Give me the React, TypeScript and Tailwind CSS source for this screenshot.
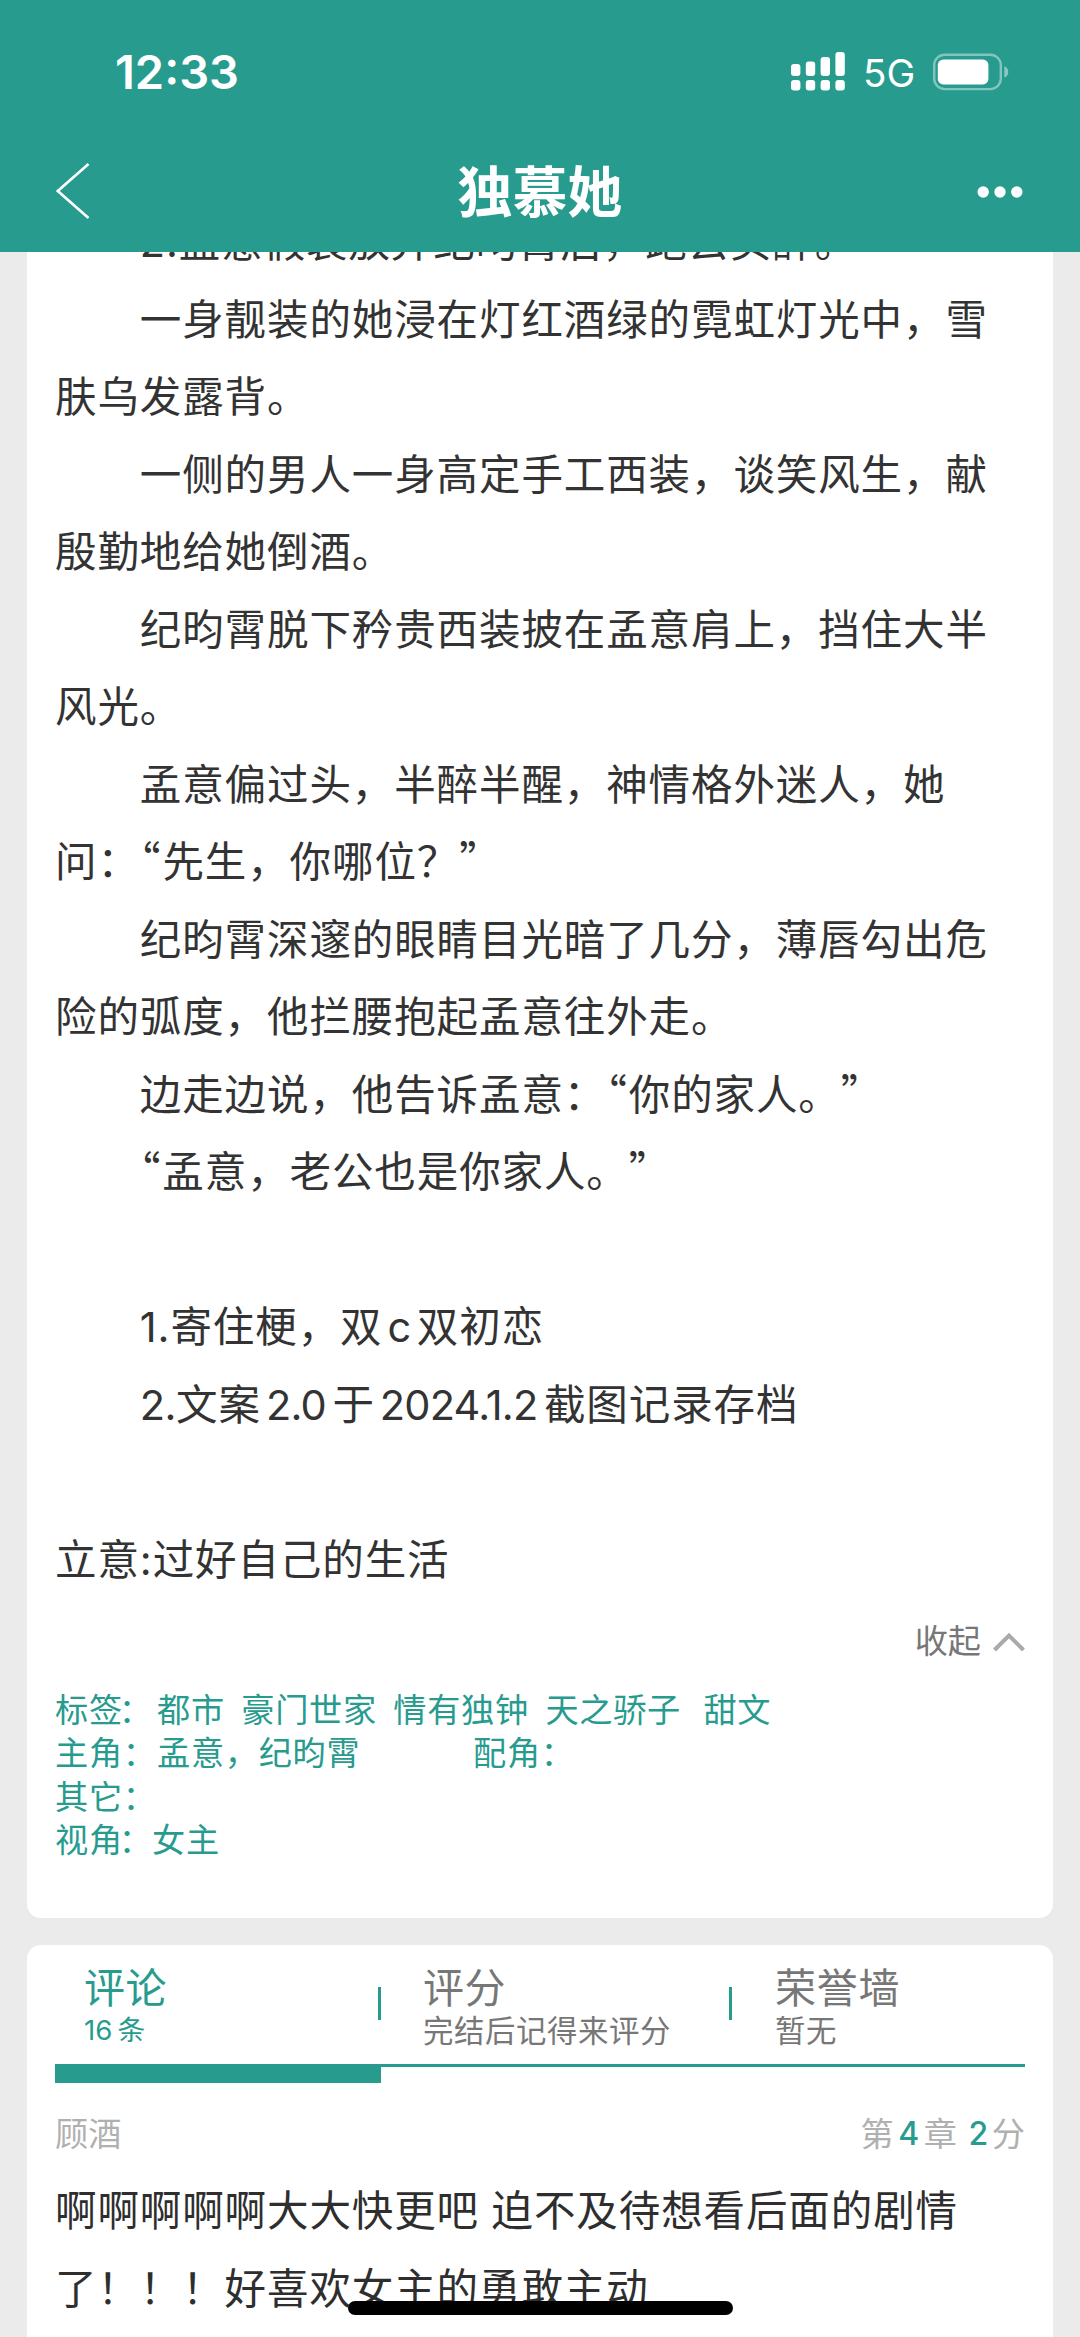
import { ReactNode } from "react";

const TAGS = ["都市", "豪门世家", "情有独钟", "天之骄子", "甜文"];

const SIGNAL_BARS = [
  { x: 0, y: 12, height: 12 },
  { x: 14.8, y: 9.5, height: 14.5 },
  { x: 29.6, y: 5, height: 19 },
  { x: 44.4, y: 0, height: 24 },
];

function SignalIcon() {
  return (
    <svg className="h-[39px] w-[54px]" viewBox="0 0 54 39" fill="#fff">
      {SIGNAL_BARS.map((bar) => (
        <g key={bar.x}>
          <rect x={bar.x} y={bar.y} width="9.4" height={bar.height} rx="3" />
          <rect x={bar.x} y="28" width="9.4" height="10.5" rx="3" />
        </g>
      ))}
    </svg>
  );
}

function BatteryIcon() {
  return (
    <svg className="h-[38px] w-[76px]" viewBox="0 0 76 38" fill="none">
      <rect x="1.2" y="1.7" width="66.6" height="34.4" rx="10.5" stroke="#fff" strokeOpacity="0.42" strokeWidth="2.4" />
      <rect x="4.8" y="6.6" width="50.6" height="24.8" rx="5.5" fill="#fff" />
      <path d="M71.3 13.2 C76.6 14.8 76.6 23 71.3 24.6 Z" fill="#fff" fillOpacity="0.45" />
    </svg>
  );
}

function Header() {
  return (
    <header className="h-[252px] shrink-0 bg-[#289b8f] text-white">
      <div className="flex h-[143px] items-center justify-between pr-[71px] pl-[115px]">
        <span className="text-[47px] leading-none font-semibold">12:33</span>
        <div className="flex items-center">
          <SignalIcon />
          <span className="mt-[3px] ml-[18px] w-[70px] text-[38.5px] leading-none">5G</span>
          <BatteryIcon />
        </div>
      </div>
      <div className="flex h-[97px] items-center justify-between pr-[57px] pl-[56px]">
        <svg className="h-[58px] w-[40px]" viewBox="0 0 40 58" fill="none">
          <path d="M32.5 1 L1.8 28 L32.5 55" stroke="#fff" strokeWidth="2.6" />
        </svg>
        <h1 className="mt-[2px] ml-[7px] text-[55px] leading-none font-bold">独慕她</h1>
        <svg className="h-[12px] w-[46px]" viewBox="0 0 46 12" fill="#fff">
          <circle cx="6.2" cy="6" r="5.7" />
          <circle cx="23" cy="6" r="5.7" />
          <circle cx="39.8" cy="6" r="5.7" />
        </svg>
      </div>
    </header>
  );
}

function Paragraph({ children }: { children?: ReactNode }) {
  return <p className="min-h-[77.53px] indent-[84.8px]">{children}</p>;
}

function Latin({ children }: { children: ReactNode }) {
  return <span className="mr-[6.5px] ml-[5px] tracking-[-0.8px]">{children}</span>;
}

// Half-width CJK quotation mark
function Quote({ children }: { children: ReactNode }) {
  return (
    <span className="font-['Noto_Sans_CJK_SC',sans-serif] leading-none tracking-[1.8px] [font-feature-settings:'halt']">
      {children}
    </span>
  );
}

function Synopsis() {
  return (
    <div className="-mt-[48px] text-[41.5px] leading-[77.53px] tracking-[0.9px] text-[#333]">
      <Paragraph>2.孟意假装放弃纪昀霄后，跑去买醉。</Paragraph>
      <Paragraph>一身靓装的她浸在灯红酒绿的霓虹灯光中，雪肤乌发露背。</Paragraph>
      <Paragraph>一侧的男人一身高定手工西装，谈笑风生，献殷勤地给她倒酒。</Paragraph>
      <Paragraph>纪昀霄脱下矜贵西装披在孟意肩上，挡住大半风光。</Paragraph>
      <Paragraph>
        孟意偏过头，半醉半醒，神情格外迷人，她问：<Quote>“</Quote>先生，你哪位？<Quote>”</Quote>
      </Paragraph>
      <Paragraph>纪昀霄深邃的眼睛目光暗了几分，薄唇勾出危险的弧度，他拦腰抱起孟意往外走。</Paragraph>
      <Paragraph>
        边走边说，他告诉孟意：<Quote>“</Quote>你的家人。<Quote>”</Quote>
      </Paragraph>
      <Paragraph>
        <Quote>“</Quote>孟意，老公也是你家人。<Quote>”</Quote>
      </Paragraph>
      <Paragraph />
      <Paragraph>
        1.寄住梗，双<Latin>c</Latin>双初恋
      </Paragraph>
      <Paragraph>
        <span className="tracking-[-0.5px]">2.</span>文案<Latin>2.0</Latin>于<Latin>2024.1.2</Latin>截图记录存档
      </Paragraph>
      <Paragraph />
      <p>立意:过好自己的生活</p>
    </div>
  );
}

function BookInfo() {
  return (
    <div className="mt-[25px] text-[33.2px] leading-[43.5px] tracking-[0.7px] whitespace-nowrap text-[#289b8f]">
      <div className="flex">
        <span className="w-[102px]">
          标签<span className="-ml-[4px]">：</span>
        </span>
        <div className="flex gap-[16.5px]">
          {TAGS.map((tag) => (
            <span key={tag} className="last:ml-[6px]">
              {tag}
            </span>
          ))}
        </div>
      </div>
      <div className="flex">
        <span className="w-[102px]">主角：</span>
        <span className="w-[316px]">孟意，纪昀霄</span>
        <span>配角：</span>
      </div>
      <div>其它：</div>
      <div className="flex">
        <span className="w-[97px]">
          视角<span className="-ml-[4px]">：</span>
        </span>
        <span>女主</span>
      </div>
    </div>
  );
}

function CommentTabs() {
  return (
    <div className="relative flex h-[122px] border-b-[3px] border-[#289b8f] pt-[18px] text-[#777]">
      <div className="flex w-[326px] justify-between pl-[29px] text-[#289b8f]">
        <div>
          <p className="text-[41px] leading-[50px] tracking-[0.5px]">评论</p>
          <p className="text-[27.7px] leading-[34px]">
            16<span className="ml-[5px]">条</span>
          </p>
        </div>
        <i className="mt-[24px] h-[33px] w-[3px] bg-[#289b8f]" />
      </div>
      <div className="flex w-[351px] justify-between pl-[42px]">
        <div>
          <p className="text-[41px] leading-[50px] tracking-[0.5px]">评分</p>
          <p className="text-[30.4px] leading-[37px] tracking-[0.6px]">完结后记得来评分</p>
        </div>
        <i className="mt-[24px] h-[33px] w-[3px] bg-[#289b8f]" />
      </div>
      <div className="pl-[43px]">
        <p className="text-[41px] leading-[50px] tracking-[0.7px]">荣誉墙</p>
        <p className="text-[30.4px] leading-[37px] tracking-[0.6px]">暂无</p>
      </div>
      <div className="absolute top-full left-0 h-[19px] w-[326px] bg-[#289b8f]" />
    </div>
  );
}

function Comment() {
  return (
    <article>
      <div className="mt-[45px] flex justify-between text-[33.2px] leading-[44px] text-[#b0b0b0]">
        <span>顾酒</span>
        <div className="flex">
          <span>第</span>
          <span className="w-[30px] text-center text-[32px] font-medium text-[#289b8f]">4</span>
          <span>章</span>
          <span className="ml-[8px] w-[27px] text-center text-[32px] font-medium text-[#289b8f]">2</span>
          <span>分</span>
        </div>
      </div>
      <p className="mt-[17px] text-[41.5px] leading-[77.53px] tracking-[0.9px] text-[#2e2e2e]">
        啊啊啊啊啊大大快更吧 迫不及待想看后面的剧情了！！！好喜欢女主的勇敢主动
      </p>
    </article>
  );
}

export default function App() {
  return (
    <div
      lang="zh-CN"
      className="relative flex h-[2337px] w-[1080px] flex-col overflow-hidden bg-[#ebebeb] font-['Inter','Noto_Sans_CJK_SC',sans-serif] [text-spacing-trim:space-all]"
    >
      <Header />
      <section className="mx-[27px] h-[1666px] shrink-0 overflow-hidden rounded-b-[14px] bg-white px-[28px]">
        <Synopsis />
        <div className="mt-[20px] flex h-[44px] items-center justify-end text-[33.2px] text-[#777]">
          <span>收起</span>
          <svg className="ml-[12px] h-[20px] w-[32px]" viewBox="0 0 32 20" fill="none">
            <path d="M1.5 18 L16 3.5 L30.5 18" stroke="#aaa" strokeWidth="4" />
          </svg>
        </div>
        <BookInfo />
      </section>
      <section className="mx-[27px] mt-[27px] h-[420px] shrink-0 rounded-t-[14px] bg-white px-[28px]">
        <CommentTabs />
        <Comment />
      </section>
      <div className="absolute bottom-[22px] left-[348px] h-[14px] w-[385px] rounded-full bg-black" />
    </div>
  );
}
